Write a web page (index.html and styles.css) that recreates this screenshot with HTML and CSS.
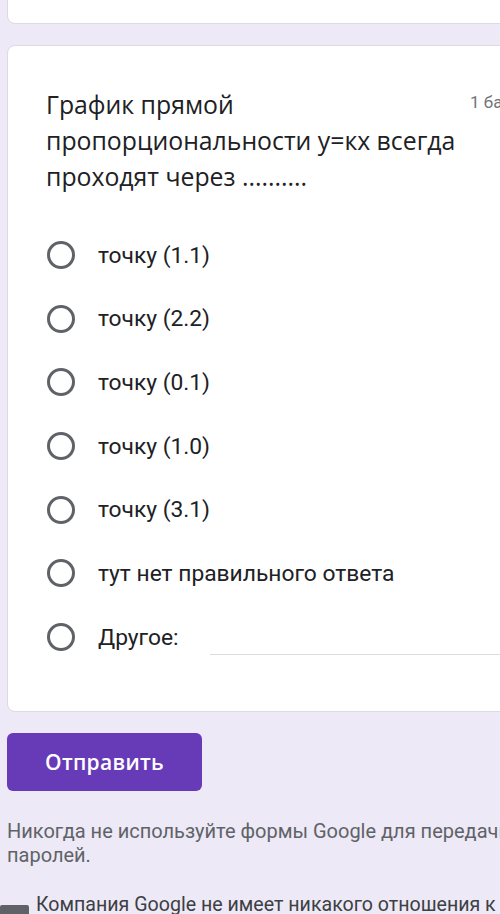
FILE: index.html
```html
<!DOCTYPE html>
<html lang="ru">
<head>
    <meta charset="UTF-8">
    <meta name="viewport" content="width=device-width, initial-scale=1.0">
    <title>Форма</title>
    <link rel="stylesheet" href="styles.css">
</head>
<body>
    <div class="page">
        <div class="card card-top"></div>

        <div class="card question">
            <div class="question-head">
                <div class="question-title">График прямой пропорциональности у=кх всегда проходят через ..........</div>
                <div class="points">1 балл</div>
            </div>
            <div class="options">
                <label class="option"><span class="radio"></span><span class="label">точку (1.1)</span></label>
                <label class="option"><span class="radio"></span><span class="label">точку (2.2)</span></label>
                <label class="option"><span class="radio"></span><span class="label">точку (0.1)</span></label>
                <label class="option"><span class="radio"></span><span class="label">точку (1.0)</span></label>
                <label class="option"><span class="radio"></span><span class="label">точку (3.1)</span></label>
                <label class="option"><span class="radio"></span><span class="label">тут нет правильного ответа</span></label>
                <label class="option other"><span class="radio"></span><span class="label">Другое:</span><span class="other-line"></span></label>
            </div>
        </div>

        <button type="button" class="submit">Отправить</button>

        <p class="notice">Никогда не используйте формы Google для передачи паролей.</p>

        <div class="disclaimer">
            <span class="flag"></span>
            <span>Компания Google не имеет никакого отношения к этому контенту.</span>
        </div>
    </div>
</body>
</html>
```

FILE: styles.css
```css
body {
    margin: 0;
    background-color: #ede9f6;
    overflow: hidden;
    font-family: Roboto, "Noto Sans", sans-serif;
    color: #202124;
}
.page {
    width: 580px;
    padding: 0 0 0 7px;
}
.card {
    background-color: #fff;
    border: 1px solid #dcdae3;
    border-radius: 8px;
}
.card-top {
    height: 60px;
    margin-top: -38px;
}
.question {
    margin-top: 21px;
    padding: 40px 0 30px 38px;
    height: 595px;
}
.question-head {
    display: flex;
    justify-content: space-between;
}
.question-title {
    width: 420px;
    font-family: "Open Sans", sans-serif;
    font-size: 24.8px;
    line-height: 36px;
    color: #202124;
}
.points {
    width: 116px;
    padding-top: 6px;
    font-size: 17px;
    color: #70757a;
}
.options {
    margin-top: 47px;
    display: flex;
    flex-direction: column;
    gap: 35.7px;
}
.option {
    display: flex;
    align-items: center;
    height: 28px;
    font-size: 22.8px;
}
.radio {
    width: 22px;
    height: 22px;
    border: 3px solid #5f6368;
    border-radius: 50%;
    margin-left: 1px;
    margin-right: 23px;
}
.label {
    color: #202124;
}
.other-line {
    width: 320px;
    margin-left: 31px;
    margin-top: 34px;
    border-bottom: 1px solid #dadce0;
}
.submit {
    margin-top: 21px;
    width: 195px;
    height: 58px;
    border: none;
    border-radius: 6px;
    background-color: #673ab7;
    color: #fff;
    font-family: "Open Sans", sans-serif;
    font-size: 21px;
    font-weight: 600;
    letter-spacing: 0.3px;
}
.notice {
    margin: 28px 0 0;
    width: 530px;
    font-size: 20px;
    line-height: 24px;
    color: #5f6368;
}
.disclaimer {
    margin: 26px 0 0 -7px;
    display: flex;
    align-items: flex-start;
    gap: 7px;
    font-size: 19.6px;
    color: #3c4043;
    white-space: nowrap;
}
.flag {
    flex-shrink: 0;
    width: 29px;
    height: 16px;
    margin-top: 12px;
    background-color: #5f6368;
    border-radius: 2px;
}
```
